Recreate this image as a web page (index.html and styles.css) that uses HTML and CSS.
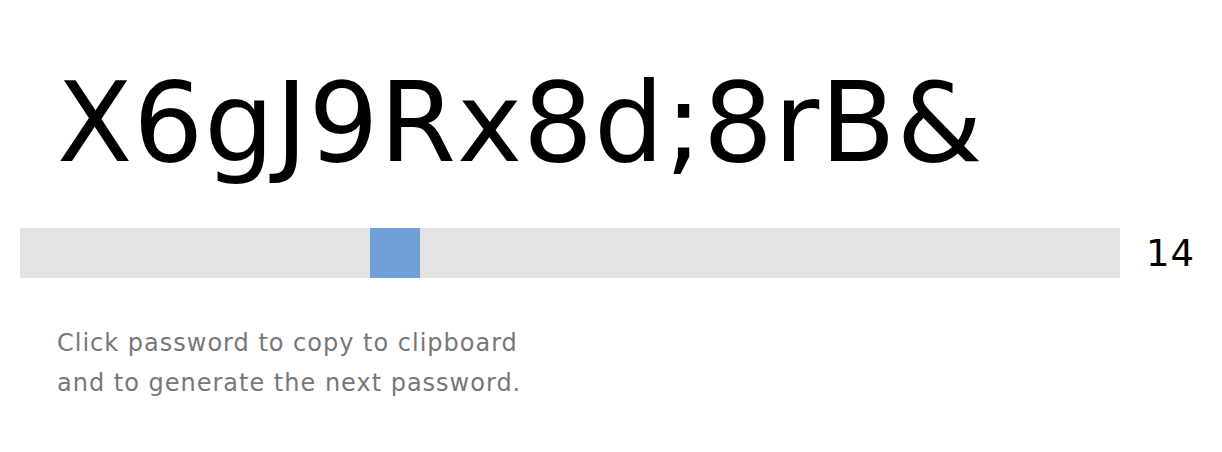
FILE: index.html
```html
<!DOCTYPE html>
<html lang="en">
<head>
<meta charset="utf-8">
<title>Password generator</title>
<link rel="stylesheet" href="styles.css">
</head>
<body>
<main class="app">
  <div class="password" title="Click to copy">X6gJ9Rx8d;8rB&amp;</div>
  <div class="length-row">
    <div class="track">
      <div class="thumb" style="margin-left: 350px;"></div>
    </div>
    <span class="length-value">14</span>
  </div>
  <p class="hint">Click password to copy to clipboard<br>and to generate the next password.</p>
</main>
</body>
</html>
```

FILE: styles.css
```css
html, body {
  margin: 0;
  padding: 0;
  background: #ffffff;
}

body {
  font-family: "DejaVu Sans", Verdana, sans-serif;
  color: #000;
}

.app {
  padding: 59px 20px 0 20px;
}

.password {
  font-size: 110px;
  line-height: 128px;
  padding-left: 37px;
  letter-spacing: 1px;
  cursor: pointer;
  white-space: nowrap;
}

.length-row {
  display: flex;
  align-items: center;
  margin-top: 41px;
}

.track {
  width: 1100px;
  height: 50px;
  background: #e3e3e3;
  display: flex;
}

.thumb {
  width: 50px;
  height: 50px;
  background: #6fa0d6;
}

.length-value {
  font-size: 37px;
  letter-spacing: 1px;
  margin-left: 26px;
}

.hint {
  margin: 45px 0 0 37px;
  font-size: 24px;
  line-height: 40px;
  letter-spacing: 1px;
  color: #777777;
}
```
